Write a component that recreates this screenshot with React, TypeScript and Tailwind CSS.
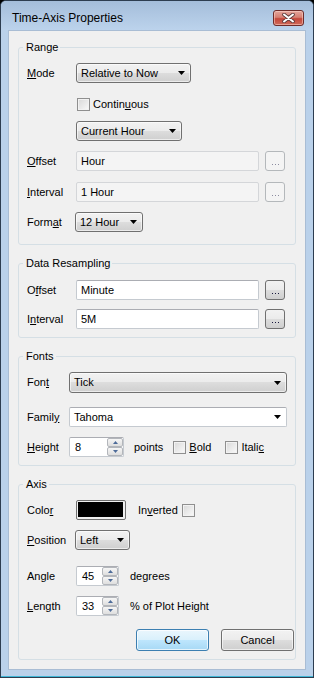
import React from "react";

const btnBg = "bg-[linear-gradient(#f2f2f2,#ebebeb_50%,#dddddd_50%,#cfcfcf)]";

// underline the access-key letter like a Win32 dialog label
const Acc = ({ text, at }: { text: string; at: number }) => (
  <span>
    {text.slice(0, at)}
    <u className="underline-offset-[1px]">{text[at]}</u>
    {text.slice(at + 1)}
  </span>
);

const Arrow = () => (
  <svg width="7" height="4" viewBox="0 0 7 4">
    <path d="M0 0h7L3.5 4z" fill="#000" />
  </svg>
);

type DropProps = { text: string; w: string; h?: string };
const Dropdown = ({ text, w, h = "h-5" }: DropProps) => (
  <div
    className={`${w} ${h} flex items-center justify-between pl-[4px] pr-[5px] rounded-[3px] border border-[#707070] ${btnBg} shadow-[inset_0_0_0_1px_rgba(255,255,255,0.6)]`}
  >
    <span>{text}</span>
    <Arrow />
  </div>
);

const Field = ({ text, w, disabled }: { text: string; w: string; disabled?: boolean }) => (
  <div
    className={`${w} h-5 flex items-center pl-[4px] rounded-[2px] border ${
      disabled ? "border-[#d4d6d9] bg-[#f4f4f4]" : "border-[#c5cad0] border-t-[#abadb3] bg-white"
    }`}
  >
    {text}
  </div>
);

const Dots = ({ disabled }: { disabled?: boolean }) => (
  <div
    className={`w-[20px] h-5 ml-[6px] rounded-[3px] border flex items-end justify-center pb-[5px] ${
      disabled ? "border-[#b4b8bb] bg-[#f4f4f4]" : `border-[#707070] ${btnBg}`
    }`}
  >
    <div className="flex gap-[2px]">
      {[0, 1, 2].map((i) => (
        <span key={i} className={`w-[1px] h-[1px] ${disabled ? "bg-[#8c8ca0]" : "bg-[#1a1a40]"}`} />
      ))}
    </div>
  </div>
);

const Check = ({ cls = "" }: { cls?: string }) => (
  <span
    className={`inline-block w-[13px] h-[13px] border border-[#8f8f8f] bg-[linear-gradient(135deg,#d8d8d8,#fafafa)] shadow-[inset_0_0_0_1px_#f2f2f2] ${cls}`}
  />
);

const SpinHalf = ({ up }: { up?: boolean }) => (
  <div className="flex-1 flex items-center justify-center border border-[#b3b6bb] rounded-[2px] bg-[linear-gradient(#f6f6f6,#dedede)]">
    <svg width="5" height="3" viewBox="0 0 5 3">
      <path d={up ? "M0 3h5L2.5 0z" : "M0 0h5L2.5 3z"} fill="#4d6b99" />
    </svg>
  </div>
);

const SpinField = ({ text, w }: { text: string; w: string }) => (
  <div className={`${w} h-5 flex rounded-[2px] border border-[#c5cad0] border-t-[#abadb3] bg-white`}>
    <span className="flex-1 flex items-center pl-[5px]">{text}</span>
    <div className="w-[16px] flex flex-col">
      <SpinHalf up />
      <SpinHalf />
    </div>
  </div>
);

const Group = ({ title, pb, mt, children }: { title: string; pb: string; mt: string; children: React.ReactNode }) => (
  <fieldset className={`border border-[#d5dfe5] rounded-[3px] px-[8px] ${pb} ${mt}`}>
    <legend className="-ml-[4px] pl-[3px] pr-[2px] leading-[13px]">{title}</legend>
    {children}
  </fieldset>
);

const Row = ({ label, lw, mt, h = "h-5", children }: { label?: React.ReactNode; lw: string; mt: string; h?: string; children: React.ReactNode }) => (
  <div className={`flex items-center ${h} ${mt}`}>
    <span className={`${lw} shrink-0`}>{label}</span>
    {children}
  </div>
);

const Button = ({ text, primary }: { text: string; primary?: boolean }) => (
  <div
    className={`w-[73px] h-[22px] flex items-center justify-center rounded-[3px] border ${
      primary
        ? "border-[#3c7fb1] bg-[linear-gradient(#eaf6fd,#d9f0fc_50%,#bee6fd_50%,#a7d9f5)] shadow-[inset_0_0_0_1px_rgba(255,255,255,0.7)]"
        : `border-[#707070] ${btnBg} shadow-[inset_0_0_0_1px_rgba(255,255,255,0.6)]`
    }`}
  >
    {text}
  </div>
);

export default function App() {
  return (
    <div className="w-[314px] h-[678px] bg-black">
      <div className="w-full h-full flex flex-col rounded-t-[6px] border border-[#2d3d50] bg-[#bad1ea] shadow-[inset_0_-1px_0_#3fb6d6] font-['Liberation_Sans',Arial,sans-serif] text-[11px] text-black">
        {/* title bar */}
        <div className="h-[29px] shrink-0 flex items-center justify-between pt-[5px] pl-[11px] pr-[9px] rounded-t-[5px] bg-[linear-gradient(#a4bdda,#bcd3ec)]">
          <span className="text-[12px]">Time-Axis Properties</span>
          <div className="w-[31px] h-[16px] flex items-center justify-center rounded-[3px] border border-[#6e2c2a] bg-[linear-gradient(#e4a59b,#d67f72_45%,#c4473b_55%,#cf6a5a)] shadow-[inset_0_0_0_1px_rgba(255,220,210,0.5)]">
            <svg width="13" height="10" viewBox="0 0 13 10">
              <path d="M2 1.5l9 7M11 1.5l-9 7" stroke="#5a3a3a" strokeWidth="3.6" strokeLinecap="round" />
              <path d="M2 1.5l9 7M11 1.5l-9 7" stroke="#fff" strokeWidth="2" strokeLinecap="round" />
            </svg>
          </div>
        </div>

        {/* client area */}
        <div className="flex-1 mx-[7px] mb-[7px] border border-[#a9bdd4] bg-[#f0f0f0] pt-[10px] px-[9px]">
          <Group title="Range" pb="pb-[12px]" mt="mt-0">
            <Row label={<Acc text="Mode" at={0} />} lw="w-[49px]" mt="mt-[9px]">
              <Dropdown text="Relative to Now" w="w-[115px]" />
            </Row>
            <Row lw="w-[50px]" mt="mt-[15px]" h="h-[13px]">
              <Check />
              <span className="ml-[3px]">
                <Acc text="Continuous" at={6} />
              </span>
            </Row>
            <Row lw="w-[49px]" mt="mt-[10px]">
              <Dropdown text="Current Hour" w="w-[106px]" />
            </Row>
            <Row label={<Acc text="Offset" at={0} />} lw="w-[49px]" mt="mt-[10px]">
              <Field text="Hour" w="w-[183px]" disabled />
              <Dots disabled />
            </Row>
            <Row label={<Acc text="Interval" at={0} />} lw="w-[49px]" mt="mt-[11px]">
              <Field text="1 Hour" w="w-[183px]" disabled />
              <Dots disabled />
            </Row>
            <Row label={<Acc text="Format" at={4} />} lw="w-[48px]" mt="mt-[10px]">
              <Dropdown text="12 Hour" w="w-[68px]" />
            </Row>
          </Group>

          <Group title="Data Resampling" pb="pb-[8px]" mt="mt-[12px]">
            <Row label={<Acc text="Offset" at={1} />} lw="w-[49px]" mt="mt-[10px]">
              <Field text="Minute" w="w-[183px]" />
              <Dots />
            </Row>
            <Row label={<Acc text="Interval" at={1} />} lw="w-[49px]" mt="mt-[9px]">
              <Field text="5M" w="w-[183px]" />
              <Dots />
            </Row>
          </Group>

          <Group title="Fonts" pb="pb-[8px]" mt="mt-[12px]">
            <Row label={<Acc text="Font" at={3} />} lw="w-[42px]" mt="mt-[9px]" h="h-[21px]">
              <Dropdown text="Tick" w="w-[218px]" h="h-[21px]" />
            </Row>
            <Row label={<Acc text="Family" at={5} />} lw="w-[42px]" mt="mt-[14px]">
              <div className="w-[218px] h-5 flex items-center justify-between pl-[4px] pr-[5px] rounded-[2px] border border-[#c5cad0] border-t-[#abadb3] bg-white">
                <span>Tahoma</span>
                <Arrow />
              </div>
            </Row>
            <Row label={<Acc text="Height" at={0} />} lw="w-[42px]" mt="mt-[10px]">
              <SpinField text="8" w="w-[55px]" />
              <span className="ml-[10px]">points</span>
              <Check cls="ml-[10px]" />
              <span className="ml-[3px]">
                <Acc text="Bold" at={0} />
              </span>
              <Check cls="ml-[14px]" />
              <span className="ml-[3px]">
                <Acc text="Italic" at={5} />
              </span>
            </Row>
          </Group>

          <Group title="Axis" pb="pb-[8px]" mt="mt-[12px]">
            <Row label={<Acc text="Color" at={4} />} lw="w-[49px]" mt="mt-[9px]">
              <div className="w-[50px] h-5 rounded-[2px] border border-[#707070] pl-[1px] pt-[1px] pr-[2px] pb-[2px] bg-[#f0f0f0]">
                <div className="w-full h-full bg-black" />
              </div>
              <span className="ml-[12px]">
                <Acc text="Inverted" at={2} />
              </span>
              <Check cls="ml-[4px]" />
            </Row>
            <Row label={<Acc text="Position" at={0} />} lw="w-[48px]" mt="mt-[10px]">
              <Dropdown text="Left" w="w-[55px]" />
            </Row>
            <Row label={<Acc text="Angle" at={2} />} lw="w-[49px]" mt="mt-[16px]">
              <SpinField text="45" w="w-[43px]" />
              <span className="ml-[11px]">degrees</span>
            </Row>
            <Row label={<Acc text="Length" at={0} />} lw="w-[49px]" mt="mt-[10px]">
              <SpinField text="33" w="w-[43px]" />
              <span className="ml-[11px]">% of Plot Height</span>
            </Row>
            <div className="flex justify-end gap-[12px] mt-[13px] -mr-[7px]">
              <Button text="OK" primary />
              <Button text="Cancel" />
            </div>
          </Group>
        </div>
      </div>
    </div>
  );
}
